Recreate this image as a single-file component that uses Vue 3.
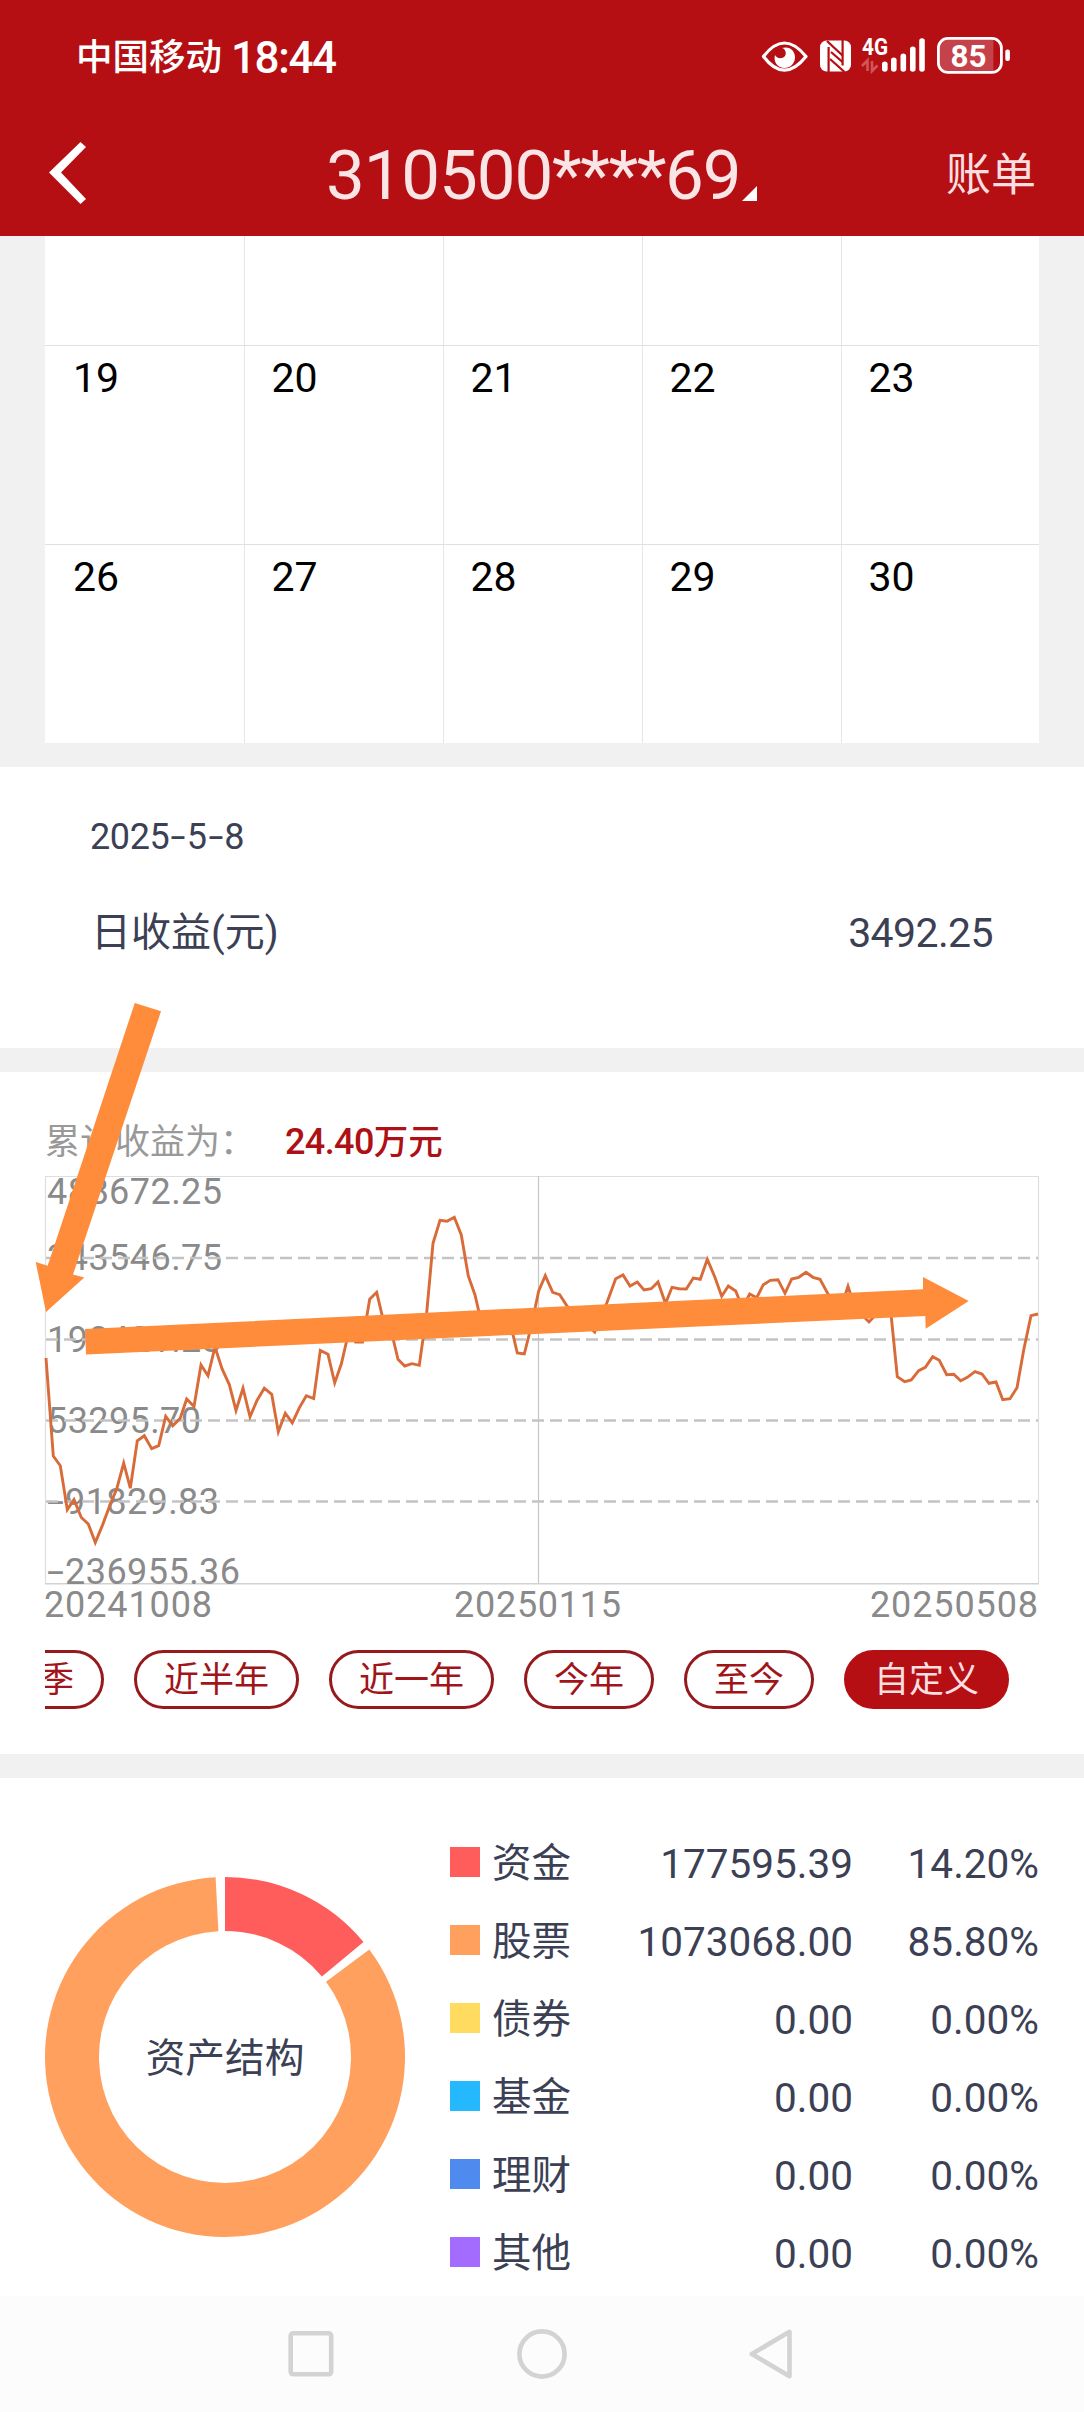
<script setup>
const weeks = [
  ['', '', '', '', ''],
  ['19', '20', '21', '22', '23'],
  ['26', '27', '28', '29', '30'],
]

// Chart coordinates are page pixels shifted by the plot origin (45, 1176).
const gridLines = [82, 163.5, 244.5, 325.5]
const yLabels = [
  { sign: '', text: '488672.25', x: 2, y: 27.5, w: 175 },
  { sign: '', text: '343546.75', x: 2, y: 94, w: 175 },
  { sign: '', text: '198421.23', x: 2, y: 175.5, w: 175 },
  { sign: '', text: '53295.70', x: 2, y: 256.5, w: 154 },
  { sign: '-', text: '91829.83', x: 20, y: 337.5, w: 154 },
  { sign: '-', text: '236955.36', x: 20, y: 407.8, w: 175 },
]
const profit = [
  [46, 1358], [53.3, 1456], [60.3, 1465.7], [67.3, 1509.6], [74, 1499.6], [81.3, 1517.5], [88.3, 1524],
  [95.3, 1542.5], [102.7, 1524.6], [110, 1505], [116.7, 1489], [123.7, 1463.2], [130.3, 1488.2],
  [137.3, 1440.7], [144.3, 1435.7], [151.7, 1448.6], [158.7, 1445.7], [165.7, 1416.4], [172.7, 1425.7],
  [180, 1418.6], [186.7, 1399], [194, 1406.4], [201, 1365], [208, 1375.7], [215, 1347], [222, 1368.6],
  [229.3, 1384.6], [236, 1410.4], [243, 1388.2], [250, 1416.8], [257, 1400.4], [264.3, 1388.2],
  [271.7, 1394.3], [278.3, 1431.8], [285.3, 1413.2], [292.3, 1422.9], [299.3, 1407.9], [306.3, 1395.7],
  [313.7, 1398.6], [320.3, 1350.4], [328, 1354.3], [334.7, 1382.9], [341.3, 1364], [348.5, 1333],
  [355.5, 1342], [362.5, 1342], [369.7, 1299.3], [376.7, 1292.3], [383.7, 1322], [391, 1330],
  [398, 1359.3], [404.7, 1366], [412, 1363.7], [419.3, 1365.3], [426.7, 1312.7], [433, 1243.3],
  [440, 1220.3], [447, 1221.3], [454.3, 1217.3], [461.3, 1235], [468.3, 1276], [475, 1295],
  [482, 1325], [496, 1328], [510, 1322], [517.3, 1353], [524.3, 1354], [531.3, 1326], [538.7, 1291],
  [545.3, 1275.7], [552.7, 1292.3], [559.7, 1294.7], [567, 1306], [581, 1320], [594.7, 1332],
  [606.7, 1303.3], [615.7, 1278.7], [623, 1275], [630, 1286], [637.3, 1282], [644, 1290],
  [651.3, 1288.7], [658, 1282], [665.5, 1303.5], [672, 1287.3], [679, 1288.7], [686.3, 1289],
  [693.3, 1278], [700.3, 1279.3], [707.3, 1259.3], [714.7, 1276.7], [721.7, 1296.3], [728.3, 1286],
  [735.7, 1291], [742.5, 1308], [749.7, 1294], [756.7, 1297.7], [763.3, 1284.7], [770.3, 1280.3],
  [778, 1279.7], [785, 1293.3], [791.7, 1279], [798.7, 1277.3], [806, 1272.3], [813, 1277.3],
  [820, 1279.3], [828, 1294], [841, 1308], [848, 1286.3], [855, 1308], [869, 1322], [876.5, 1314],
  [890, 1304], [897.3, 1376.7], [904.7, 1381.7], [911.3, 1380], [918.7, 1370.7], [925.3, 1367.3],
  [932.7, 1356.7], [939.3, 1360.3], [946.7, 1374.7], [953.7, 1374.3], [960.7, 1380.7], [967.3, 1377.3],
  [975, 1371.7], [982, 1374], [989, 1383.3], [996, 1382], [1002.7, 1399.7], [1010, 1398.7],
  [1017, 1387.7], [1023.7, 1350], [1031, 1315.7], [1038, 1314],
]
const profitLine = profit.map(([x, y]) => `${(x - 45).toFixed(1)},${(y - 1176).toFixed(1)}`).join(' ')

const ranges = ['近一季', '近半年', '近一年', '今年', '至今', '自定义']

const assets = [
  { name: '资金', amount: '177595.39', share: '14.20%', color: '#ff5c5c' },
  { name: '股票', amount: '1073068.00', share: '85.80%', color: '#ffa05e' },
  { name: '债券', amount: '0.00', share: '0.00%', color: '#ffdc60' },
  { name: '基金', amount: '0.00', share: '0.00%', color: '#25b8ff' },
  { name: '理财', amount: '0.00', share: '0.00%', color: '#4f8aee' },
  { name: '其他', amount: '0.00', share: '0.00%', color: '#a46bff' },
]

function ringSegment(from, to, outer = 180, inner = 126) {
  const at = (deg, r) => {
    const a = (deg * Math.PI) / 180
    return `${(180 + r * Math.sin(a)).toFixed(2)} ${(180 - r * Math.cos(a)).toFixed(2)}`
  }
  const large = to - from > 180 ? 1 : 0
  return `M${at(from, outer)}A${outer} ${outer} 0 ${large} 1 ${at(to, outer)}L${at(to, inner)}A${inner} ${inner} 0 ${large} 0 ${at(from, inner)}Z`
}
const ring = [
  { color: '#ff5c5c', d: ringSegment(0, 50.3) },
  { color: '#ffa05e', d: ringSegment(53.3, 357) },
]
</script>

<template>
  <div class="screen">
    <header class="header">
      <div class="status">
        <span class="carrier">中国移动</span>
        <span class="time">18:44</span>
        <svg class="status-icons" width="252" height="44" viewBox="0 0 252 44">
          <path d="M3.500 21.500C11 11.500 18 8 24.500 8S38 11.500 46 21.500C38 31.500 31 35.200 24.500 35.200S11 31.500 3.500 21.500Z" fill="none" stroke="#fff" stroke-width="3.200" stroke-linejoin="round" />
          <path d="M15 20C16.500 24 23.500 24.500 25.500 20C26.500 16.500 24.500 13.500 22 13C29.500 10.500 35.500 16 35 23C34.500 29 30 33 24.500 33C18 33 13 27 15 20Z" fill="#fff" />
          <rect x="60" y="5.500" width="31" height="31" rx="6.500" fill="#fff" />
          <path d="M68.600 12V37M82.600 5V30.500" fill="none" stroke="#b50f14" stroke-width="2.200" />
          <path d="M67 6L82.500 20.500M71 17L82.500 27M70 24L84.500 37" fill="none" stroke="#b50f14" stroke-width="2.300" />
          <text x="102" y="20" class="net" textLength="26" lengthAdjust="spacingAndGlyphs">4G</text>
          <path d="M102 31L107.500 25.500V36M112 26V36L117.500 30.500" fill="none" stroke="#d2555a" stroke-width="2.600" />
          <g fill="#fff">
            <rect x="122" y="26.500" width="5.600" height="10.300" rx="2.800" />
            <rect x="131" y="22.500" width="5.600" height="14.300" rx="2.800" />
            <rect x="140.500" y="18.500" width="5.600" height="18.300" rx="2.800" />
            <rect x="150" y="11.500" width="5.600" height="25.300" rx="2.800" />
            <rect x="159.200" y="3.200" width="5.600" height="33.600" rx="2.800" />
          </g>
          <path d="M233.400 4H188Q179 4 179 12.500V27.500Q179 36 188 36H233.400Z" fill="#c6424a" />
          <rect x="178.400" y="3.400" width="63" height="34" rx="9.500" fill="none" stroke="#fff" stroke-width="2.800" />
          <rect x="245.300" y="14.500" width="4.600" height="11.500" rx="2" fill="#fff" />
          <text x="190.500" y="32" class="battery" textLength="36" lengthAdjust="spacingAndGlyphs">85</text>
        </svg>
      </div>
      <div class="title-bar">
        <svg class="back" width="40" height="64" viewBox="0 0 40 64">
          <path d="M0 31.500L31.500 1L37 6L12 31.500L37 58L31.500 63Z" fill="#fff" />
        </svg>
        <div class="account">
          <span class="digits">310500</span><span class="stars">****</span><span class="digits">69</span>
          <svg class="caret" width="15" height="15" viewBox="0 0 15 15"><path d="M15 0V15H0Z" fill="#fff" /></svg>
        </div>
        <span class="bill">账单</span>
      </div>
    </header>

    <section class="calendar">
      <div v-for="(week, i) in weeks" :key="i" class="week">
        <div v-for="(day, j) in week" :key="j" class="day">{{ day }}</div>
      </div>
    </section>

    <section class="daily">
      <div class="date">2025<span class="dash">-</span>5<span class="dash">-</span>8</div>
      <div class="daily-row">
        <span>日收益(元)</span>
        <span class="daily-value">3492.25</span>
      </div>
    </section>

    <section class="trend">
      <div class="trend-title">
        <span class="trend-label">累计收益为：</span>
        <span class="trend-value"><span class="trend-number">24.40</span>万元</span>
      </div>
      <svg class="chart" width="995" height="450" viewBox="0 0 995 450">
        <path d="M0.500 407V0.500H993.500V407" fill="none" stroke="#dedede" stroke-width="1.200" />
        <path d="M0 407.700H994" stroke="#d2d2d2" stroke-width="1.600" />
        <g class="axis-text">
          <text v-for="l in yLabels" :key="l.text" :y="l.y"><tspan v-if="l.sign" x="2" textLength="17" lengthAdjust="spacingAndGlyphs">{{ l.sign }}</tspan><tspan :x="l.x" :textLength="l.w">{{ l.text }}</tspan></text>
          <text x="-1" y="440.500" textLength="168">20241008</text>
          <text x="409" y="440.500" textLength="167">20250115</text>
          <text x="825" y="440.500" textLength="168">20250508</text>
        </g>
        <path v-for="y in gridLines" :key="y" :d="`M1 ${y}H993`" stroke="#c3c3c3" stroke-width="2.700" stroke-dasharray="12 6" />
        <path d="M493.500 0V407" stroke="#c6c6c6" stroke-width="1.200" />
        <polyline :points="profitLine" fill="none" stroke="#d96b38" stroke-width="2.900" />
      </svg>
      <div class="ranges">
        <span v-for="(r, i) in ranges" :key="r" class="pill" :class="{ active: i === ranges.length - 1 }">{{ r }}</span>
      </div>
    </section>

    <section class="assets">
      <div class="donut">
        <svg width="360" height="360" viewBox="0 0 360 360">
          <path v-for="s in ring" :key="s.color" :d="s.d" :fill="s.color" />
        </svg>
        <span class="donut-label">资产结构</span>
      </div>
      <div class="legend">
        <div v-for="a in assets" :key="a.name" class="legend-row">
          <i class="swatch" :style="{ background: a.color }"></i>
          <span class="name">{{ a.name }}</span>
          <span class="amount">{{ a.amount }}</span>
          <span class="share">{{ a.share }}</span>
        </div>
      </div>
    </section>

    <nav class="nav">
      <svg width="1084" height="116" viewBox="0 0 1084 116" fill="none" stroke="#d3d3d3" stroke-width="4.600" stroke-linejoin="round">
        <rect x="290.700" y="37.300" width="40.500" height="41" rx="2.500" />
        <circle cx="542" cy="58" r="22.600" />
        <path d="M789.500 35.800V80.200L751.800 58Z" />
      </svg>
    </nav>

    <svg class="arrows" width="1084" height="2412" viewBox="0 0 1084 2412" fill="#ff8c3a">
      <path d="M134.800 1003L161 1011.300L73 1274.600L84.300 1277.500L46 1312L35.700 1262L47.700 1265.700Z" />
      <path d="M85 1329L923 1289.300V1277L968.700 1301L925.700 1328.700L925.300 1316L86 1354.600Z" />
    </svg>
  </div>
</template>

<style>
body {
  margin: 0;
}
</style>

<style scoped>
.screen {
  position: relative;
  width: 1084px;
  height: 2412px;
  overflow: hidden;
  display: flex;
  flex-direction: column;
  background: #f1f1f1;
  font-family: Roboto, "Noto Sans CJK SC", sans-serif;
  color: #3b4055;
}
.header {
  height: 236px;
  flex: none;
  box-sizing: border-box;
  padding-top: 35px;
  background: #b50f14;
  color: #fff;
}
.status {
  display: flex;
  height: 44px;
  line-height: 46px;
  padding-left: 76px;
}
.carrier {
  width: 155px;
  font-size: 36.500px;
  font-weight: 500;
}
.time {
  width: 529px;
  font-size: 44px;
  font-weight: 500;
  letter-spacing: -1.4px;
}
.net {
  font-size: 23px;
  font-weight: 700;
  fill: #fff;
}
.battery {
  font-size: 32px;
  font-weight: 700;
  fill: #fff;
}
.title-bar {
  display: flex;
  align-items: center;
  height: 96px;
  margin-top: 46px;
  padding: 0 48px 0 49px;
}
.account {
  display: flex;
  flex: 1;
  padding: 6px 0 0 237px;
  line-height: 84px;
  font-size: 69px;
  color: #f9e5e6;
}
.digits {
  letter-spacing: -1.1px;
}
.stars {
  letter-spacing: -1.5px;
}
.caret {
  align-self: flex-end;
  margin: 0 0 17px 2px;
}
.bill {
  padding-top: 5px;
  font-size: 45px;
  line-height: 84px;
  color: #fbdfe0;
}
.calendar {
  display: flex;
  flex-direction: column;
  flex: none;
  height: 507px;
  margin: 0 45px 24px;
  background: #fff;
}
.week {
  display: flex;
  height: 199px;
  box-sizing: border-box;
  border-top: 1px solid #e0e0e0;
}
.week:first-child {
  height: 109px;
  border-top: 0;
}
.day {
  width: 199px;
  box-sizing: border-box;
  padding: 7px 0 0 26.500px;
  border-right: 1px solid #e6e6e6;
  font-size: 41px;
  line-height: 50px;
  color: #000;
}
.day:first-child {
  width: 200px;
  padding-left: 28px;
}
.day:last-child {
  width: 197px;
  border-right: 0;
}
.daily {
  flex: none;
  height: 281px;
  box-sizing: border-box;
  padding: 45px 91px 0 90px;
  background: #fff;
}
.date {
  font-size: 36px;
  line-height: 50px;
  letter-spacing: -0.4px;
}
.dash {
  display: inline-block;
  width: 17.500px;
  text-align: center;
  transform: scaleX(1.5);
}
.daily-row {
  display: flex;
  justify-content: space-between;
  margin-top: 41px;
  padding-left: 1px;
  font-size: 40px;
  line-height: 60px;
}
.daily-value {
  font-size: 41px;
  letter-spacing: -0.6px;
}
.trend {
  display: flex;
  flex-direction: column;
  flex: none;
  height: 682px;
  box-sizing: border-box;
  margin-top: 24px;
  padding: 44px 45px 0;
  background: #fff;
}
.trend-title {
  display: flex;
  height: 50px;
  line-height: 50px;
  font-size: 35px;
}
.trend-label {
  width: 240px;
  line-height: 54px;
  color: #999;
}
.trend-value {
  font-weight: 500;
  font-size: 34.500px;
  line-height: 52px;
  color: #ad1015;
}
.trend-number {
  font-size: 36px;
  letter-spacing: -0.6px;
}
.chart {
  flex: none;
  margin-top: 10px;
  overflow: visible;
}
.axis-text {
  font-size: 36px;
  fill: #8a8a8a;
}
.ranges {
  display: flex;
  justify-content: flex-end;
  gap: 30px;
  height: 59px;
  margin-top: 24px;
  padding-right: 30px;
  overflow: hidden;
}
.pill {
  flex: none;
  box-sizing: border-box;
  height: 59px;
  padding: 0 27px;
  border: 3px solid #96191e;
  border-radius: 30px;
  font-size: 35px;
  line-height: 56px;
  color: #a1151a;
}
.pill.active {
  border-color: #b50f14;
  background: #b50f14;
  color: #fbdfe0;
}
.assets {
  display: flex;
  flex: none;
  height: 518px;
  box-sizing: border-box;
  margin-top: 24px;
  padding: 45px 45px 0;
  background: #fff;
}
.donut {
  display: grid;
  width: 360px;
  height: 360px;
  margin-top: 54px;
}
.donut > * {
  grid-area: 1 / 1;
}
.donut-label {
  place-self: center;
  padding-top: 3px;
  font-size: 39.700px;
  line-height: 60px;
}
.legend {
  flex: 1;
  margin-left: 45px;
}
.legend-row {
  display: flex;
  align-items: center;
  height: 78px;
  font-size: 39.500px;
  line-height: 60px;
}
.swatch {
  width: 30px;
  height: 30px;
}
.name {
  width: 120px;
  margin-left: 12px;
  padding-top: 3px;
}
.amount,
.share {
  padding-top: 3px;
  text-align: right;
  font-size: 40.500px;
}
.amount {
  flex: 1;
}
.share {
  width: 186px;
}
.nav {
  flex: none;
  height: 116px;
  background: #fcfcfc;
}
.arrows {
  position: absolute;
  left: 0;
  top: 0;
  pointer-events: none;
}
</style>
